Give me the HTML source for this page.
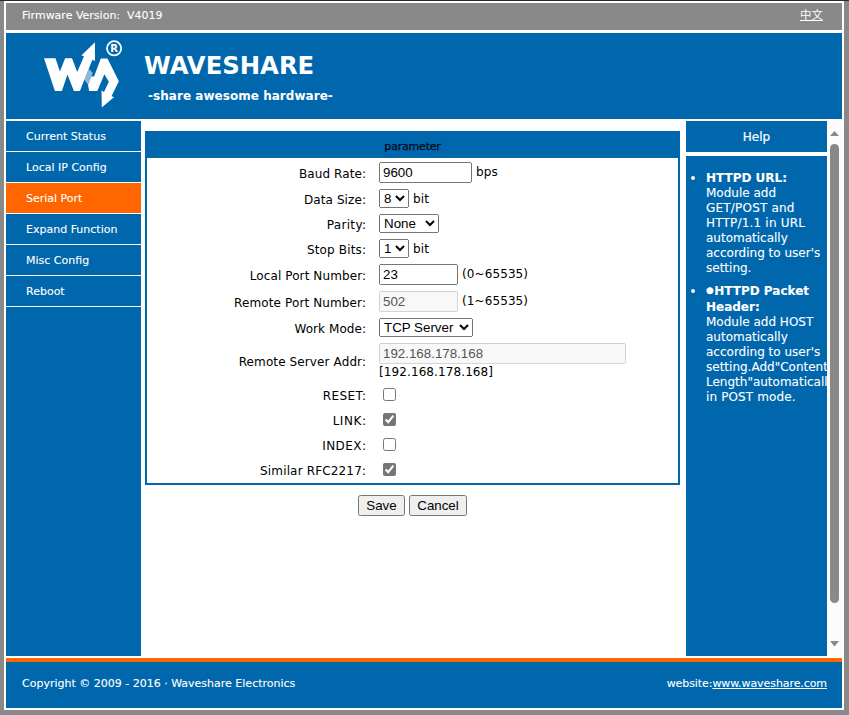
<!DOCTYPE html>
<html lang="en">
<head>
<meta charset="utf-8">
<title>Serial Port</title>
<style>
html,body{margin:0;padding:0;}
body{width:849px;height:715px;overflow:hidden;background:#898989;position:relative;
 font-family:"DejaVu Sans","Liberation Sans","Noto Sans CJK SC",sans-serif;font-size:12px;color:#000;}
.abs{position:absolute;}
#topline{left:0;top:0;width:849px;height:1px;background:#2a2a2a;}
#page{left:4px;top:1px;width:840px;height:709px;background:#fff;}
#hdr{left:6px;top:3px;width:836px;height:27px;background:#898989;}
#banner{left:6px;top:33px;width:836px;height:85.5px;background:#0067ad;}
.t11{font-size:11px;line-height:14px;color:#fff;white-space:nowrap;-webkit-text-stroke:0.1px #fff;}
#fw{left:22px;top:9px;}
#lang{left:800px;top:7px;font-size:11.4px;line-height:16px;color:#fff;text-decoration:underline;font-family:"Liberation Sans","Noto Sans CJK SC",sans-serif;}
#brand{left:144px;top:51px;font-size:24.3px;line-height:30px;font-weight:bold;color:#fff;white-space:nowrap;}
#tag{left:148px;top:88px;letter-spacing:0.04px;font-size:12px;line-height:16px;font-weight:bold;color:#fff;white-space:nowrap;}
#menu{left:6px;top:121px;width:135px;height:535px;background:#0067ad;}
.mi{position:absolute;left:0;width:135px;height:30px;border-bottom:1px solid #fff;color:#fff;font-size:11px;line-height:30px;-webkit-text-stroke:0.1px #fff;}
.mi span{position:absolute;left:20px;top:1px;white-space:nowrap;}
.mi.on{background:#ff6600;}
#panel{left:145px;top:131px;width:531px;height:350px;border:2px solid #0067ad;background:#fff;}
#phead{left:145px;top:131px;width:535px;height:27px;background:#0067ad;color:#00091c;font-size:11px;line-height:31px;text-align:center;letter-spacing:-0.2px;-webkit-text-stroke:0.25px #00091c;}
.lb{position:absolute;right:483px;white-space:nowrap;font-size:12px;line-height:14px;color:#000;}
.tx{position:absolute;white-space:nowrap;font-size:12px;line-height:14px;color:#000;letter-spacing:0.1px;}
input,select,button{font-family:"Liberation Sans",sans-serif;font-size:13.3333px;margin:0;}
input[type=text]{position:absolute;left:379px;height:21px;box-sizing:border-box;}
select{position:absolute;left:379px;height:19px;box-sizing:border-box;}
input[type=checkbox]{position:absolute;left:383px;width:13px;height:13px;margin:0;accent-color:#767676;}
button{position:absolute;height:21px;box-sizing:border-box;}
#helph{left:686px;top:121px;width:141px;height:31px;background:#0067ad;color:#fff;text-align:center;line-height:33px;font-size:12px;-webkit-text-stroke:0.2px #fff;}
#helpb{left:686px;top:156px;width:141px;height:500px;background:#0067ad;overflow:hidden;}
.hl{position:absolute;left:20px;white-space:nowrap;color:#fff;font-size:12px;line-height:14px;-webkit-text-stroke:0.1px #fff;}
.hl.b{font-weight:bold;}
.bl{display:inline-block;width:8.2px;font-size:8.8px;line-height:10px;vertical-align:2.2px;text-align:left;}
.dot{position:absolute;left:5px;width:4px;height:4px;border-radius:2px;background:#fff;}
#sbar{left:827px;top:121px;width:15px;height:535px;background:#fcfcfc;}
#thumb{left:830px;top:143.5px;width:9px;height:459.5px;border-radius:4.5px;background:#898989;}
#orange{left:6px;top:658px;width:836px;height:4px;background:#ff6600;}
#foot{left:6px;top:662px;width:836px;height:46px;background:#0067ad;}
#copy{left:22px;top:677px;}
#web{right:22px;top:677px;letter-spacing:-0.08px;}
#web u{text-decoration:underline;}
</style>
</head>
<body>
<div class="abs" id="topline"></div>
<div class="abs" id="page"></div>
<div class="abs" id="hdr"></div>
<div class="abs t11" id="fw">Firmware Version:&nbsp; V4019</div>
<div class="abs" id="lang">中文</div>
<div class="abs" id="banner"></div>
<svg class="abs" id="logo" style="left:40px;top:36px" width="85" height="76" viewBox="40 36 85 76">
 <polygon fill="#fff" points="44,58.3 55.5,58.3 59.9,71.5 65.1,58.3 72,58.3 77.2,71.9 84,56.2 81.4,55.6 94.9,42.2 95,60.9 92.4,59.8 79.9,91 73.9,91 67.45,74.4 61.9,91 54.9,91"/>
 <polygon fill="#fff" fill-opacity="0.55" points="88.9,68.9 92.8,73.1 88.1,84.9 84.5,79.7"/>
 <polygon fill="#fff" points="100.8,58.4 107.5,58.4 118.85,81.2 111.6,96 113.9,97.2 101.8,107.6 101.5,90.4 104,92.1 108.8,81.75 104.4,74.2 97.3,91 89.1,91 88.1,84.9 91.3,76.4 94.05,76.4"/>
 <circle cx="114.1" cy="48.3" r="7.1" fill="none" stroke="#fff" stroke-width="1.8"/>
 <text x="114.2" y="52.1" font-family="DejaVu Sans, Liberation Sans, sans-serif" font-weight="bold" font-size="10" text-anchor="middle" fill="#fff">R</text>
</svg>
<div class="abs" id="brand">WAVESHARE</div>
<div class="abs" id="tag">-share awesome hardware-</div>

<div class="abs" id="menu">
 <div class="mi" style="top:0"><span>Current Status</span></div>
 <div class="mi" style="top:31px"><span>Local IP Config</span></div>
 <div class="mi on" style="top:62px"><span>Serial Port</span></div>
 <div class="mi" style="top:93px"><span>Expand Function</span></div>
 <div class="mi" style="top:124px"><span>Misc Config</span></div>
 <div class="mi" style="top:155px"><span>Reboot</span></div>
</div>

<div class="abs" id="panel"></div>
<div class="abs" id="phead">parameter</div>

<div class="lb" style="top:167px;letter-spacing:0.09px;margin-right:-0.09px">Baud Rate:</div>
<input type="text" value="9600" style="top:162px;width:93px">
<div class="tx" style="left:476px;top:165px">bps</div>

<div class="lb" style="top:193px;letter-spacing:0.1px;margin-right:-0.1px">Data Size:</div>
<select style="top:189px;width:30px"><option>8</option></select>
<div class="tx" style="left:413px;top:192px">bit</div>

<div class="lb" style="top:218px;letter-spacing:0.33px;margin-right:-0.33px">Parity:</div>
<select style="top:214px;width:60px"><option>None</option></select>

<div class="lb" style="top:243px;letter-spacing:0.15px;margin-right:-0.15px">Stop Bits:</div>
<select style="top:239px;width:30px"><option>1</option></select>
<div class="tx" style="left:413px;top:242px">bit</div>

<div class="lb" style="top:269px;letter-spacing:0.101px;margin-right:-0.101px">Local Port Number:</div>
<input type="text" value="23" style="top:264px;width:79px">
<div class="tx" style="left:462px;top:267px">(0~65535)</div>

<div class="lb" style="top:296px;letter-spacing:0.123px;margin-right:-0.123px">Remote Port Number:</div>
<input type="text" value="502" disabled style="top:291px;width:79px">
<div class="tx" style="left:462px;top:294px">(1~65535)</div>

<div class="lb" style="top:322px;letter-spacing:0.06px;margin-right:-0.06px">Work Mode:</div>
<select style="top:318px;width:94px"><option>TCP Server</option></select>

<div class="lb" style="top:355px;letter-spacing:0.113px;margin-right:-0.113px">Remote Server Addr:</div>
<input type="text" value="192.168.178.168" disabled style="top:343px;width:247px">
<div class="tx" style="left:379px;top:365px">[192.168.178.168]</div>

<div class="lb" style="top:389px;letter-spacing:0.433px;margin-right:-0.433px">RESET:</div>
<input type="checkbox" style="top:388px">
<div class="lb" style="top:414px;letter-spacing:0.56px;margin-right:-0.56px">LINK:</div>
<input type="checkbox" checked style="top:413px">
<div class="lb" style="top:439px;letter-spacing:0.433px;margin-right:-0.433px">INDEX:</div>
<input type="checkbox" style="top:438px">
<div class="lb" style="top:464px;letter-spacing:0.156px;margin-right:-0.156px">Similar RFC2217:</div>
<input type="checkbox" checked style="top:463px">

<button type="button" style="left:358px;top:495px;width:47px">Save</button>
<button type="button" style="left:409px;top:495px;width:58px">Cancel</button>

<div class="abs" id="helph">Help</div>
<div class="abs" id="helpb">
 <div class="dot" style="top:20px"></div>
 <div class="hl b" style="top:15px">HTTPD URL:</div>
 <div class="hl" style="top:30px">Module add</div>
 <div class="hl" style="top:45px;letter-spacing:0.2px">GET/POST and</div>
 <div class="hl" style="top:60px;letter-spacing:0.19px">HTTP/1.1 in URL</div>
 <div class="hl" style="top:75px">automatically</div>
 <div class="hl" style="top:90px">according to user's</div>
 <div class="hl" style="top:105px">setting.</div>
 <div class="dot" style="top:133px"></div>
 <div class="hl b" style="top:128px"><span class="bl">●</span>HTTPD Packet</div>
 <div class="hl b" style="top:144px">Header:</div>
 <div class="hl" style="top:159px">Module add HOST</div>
 <div class="hl" style="top:174px">automatically</div>
 <div class="hl" style="top:189px">according to user's</div>
 <div class="hl" style="top:204px">setting.Add"Content-</div>
 <div class="hl" style="top:219px">Length"automatically</div>
 <div class="hl" style="top:234px;letter-spacing:0.13px">in POST mode.</div>
</div>
<div class="abs" id="sbar"></div>
<svg class="abs" style="left:827px;top:121px" width="15" height="535" viewBox="0 0 15 535">
 <polygon fill="#898989" points="3,15 12,15 7.5,10"/>
 <polygon fill="#898989" points="3,520 12,520 7.5,525.5"/>
</svg>
<div class="abs" id="thumb"></div>

<div class="abs" id="orange"></div>
<div class="abs" id="foot"></div>
<div class="abs t11" id="copy">Copyright © 2009 - 2016 · Waveshare Electronics</div>
<div class="abs t11" id="web">website:<u>www.waveshare.com</u></div>
</body>
</html>
